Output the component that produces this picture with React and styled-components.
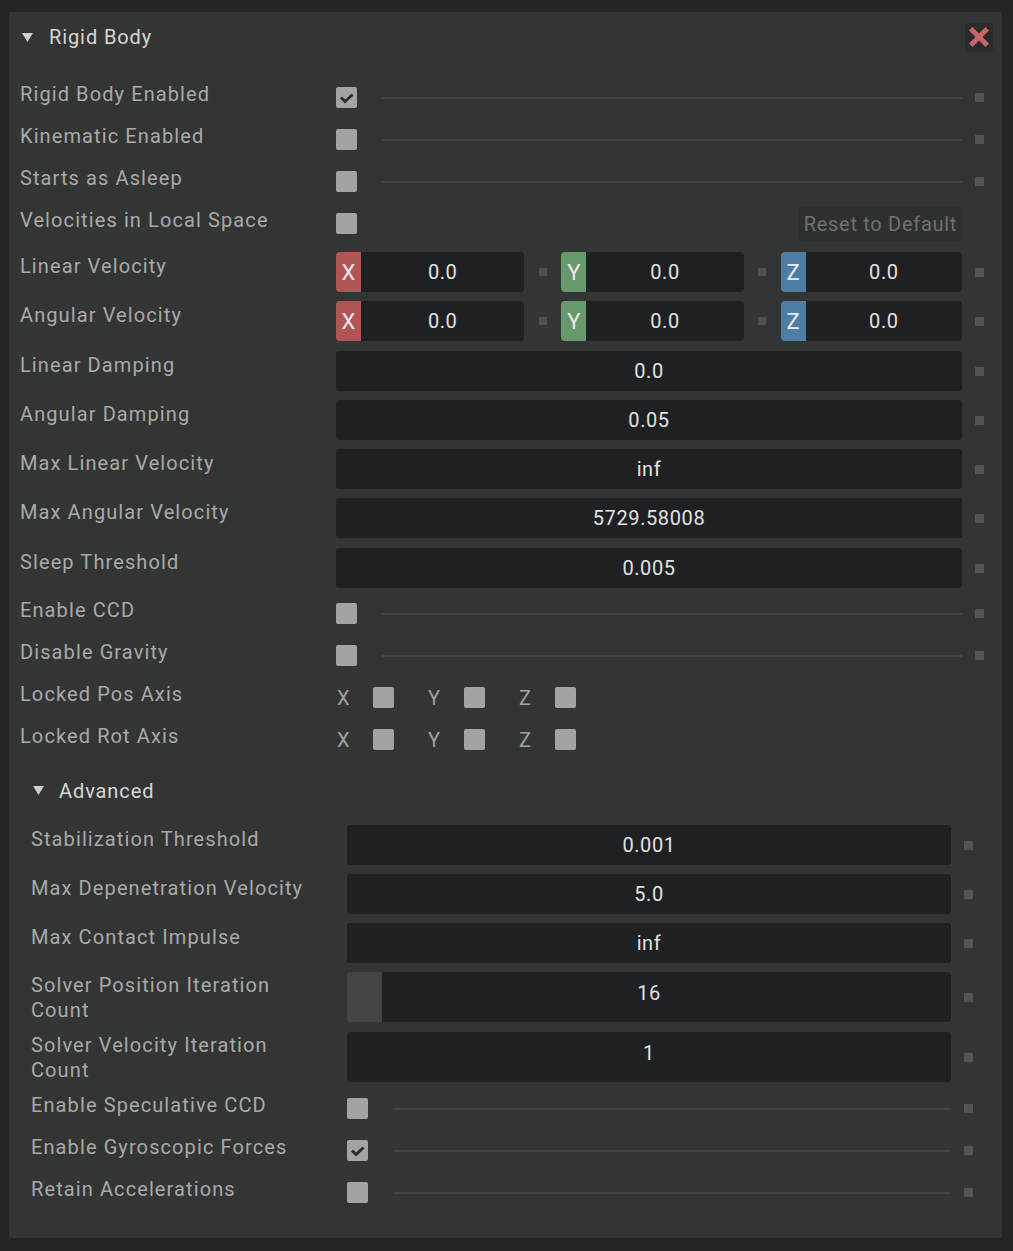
import React from "react";
import styled, { createGlobalStyle } from "styled-components";

const Global = createGlobalStyle`
  html, body { margin: 0; padding: 0; background: #232426; }
  body { font-family: Roboto, "Liberation Sans", Arial, sans-serif; }
  * { box-sizing: border-box; }
`;

const Page = styled.div`
  padding: 12px 11px 12px 9px;
  min-height: 1251px;
`;

const Panel = styled.div`
  width: 993px;
  background: #333534;
  border-radius: 2px;
  padding: 10px 18px 23.5px 11px;
  color: #a9a9a9;
  font-size: 20px;
  letter-spacing: 1.1px;
`;

const HeaderRow = styled.div`
  display: flex;
  align-items: center;
  height: 30px;
  margin-right: -9px;
  margin-top: ${(p) => p.$mt || 0}px;
  padding-left: ${(p) => p.$indent || 2}px;
`;

const HeaderTitle = styled.div`
  color: #d6d6d6;
  line-height: 30px;
  margin-left: ${(p) => p.$ml || 16}px;
  letter-spacing: 0.9px;
`;

const Spacer = styled.div`
  flex: 1;
`;

const CloseButton = styled.div`
  width: 28px;
  height: 29px;
  border-radius: 4px;
  background: #2a2b2c;
  display: flex;
  align-items: center;
  justify-content: center;
`;

const Rows = styled.div`
  display: flex;
  flex-direction: column;
  margin-top: ${(p) => p.$mt || 0}px;
`;

const Section = styled.div`
  display: flex;
  flex-direction: column;
  margin: ${(p) => p.$mt || 0}px 11px 0 11px;
`;

const Row = styled.div`
  display: flex;
  align-items: flex-start;
  height: ${(p) => p.$h}px;
  padding-top: ${(p) => p.$pt || 0}px;
`;

const Label = styled.div`
  width: 316px;
  flex: none;
  line-height: ${(p) => (p.$two ? 25 : 24)}px;
  margin-top: ${(p) => p.$mt}px;
  white-space: ${(p) => (p.$two ? "normal" : "nowrap")};
  padding-right: 40px;
`;

const Widget = styled.div`
  flex: 1;
  display: flex;
  align-items: center;
  height: ${(p) => p.$h}px;
  min-width: 0;
`;

const DefaultDot = styled.div`
  width: 9px;
  height: 9px;
  background: #535554;
  flex: none;
  margin-left: 13px;
  visibility: ${(p) => (p.$hidden ? "hidden" : "visible")};
  margin-top: ${(p) => p.$mt}px;
`;

const Box = styled.div`
  width: 21px;
  height: 21px;
  border-radius: 2px;
  background: #a3a3a3;
  flex: none;
  display: flex;
  align-items: center;
  justify-content: center;
`;

const Line = styled.div`
  flex: 1;
  height: 2px;
  background: #434544;
  margin-left: 25px;
`;

const Field = styled.div`
  position: relative;
  flex: 1;
  height: 100%;
  background: #1f2022;
  border-radius: 3px;
  display: flex;
  align-items: center;
  justify-content: center;
  color: #e2e2e2;
  overflow: hidden;
`;

const SliderFill = styled.div`
  position: absolute;
  left: 0;
  top: 0;
  bottom: 0;
  background: #444545;
`;

const Value = styled.span`
  position: relative;
  letter-spacing: 0.6px;
  margin-bottom: ${(p) => (p.$two ? 8 : 0)}px;
`;

const VecGroup = styled.div`
  display: flex;
  flex: ${(p) => p.$grow};
  height: 40px;
  background: #1f2022;
  border-radius: 4px;
  overflow: hidden;
`;

const Badge = styled.div`
  width: 25px;
  flex: none;
  background: ${(p) => p.$c};
  color: #ececec;
  font-size: 22px;
  display: flex;
  align-items: center;
  justify-content: center;
  letter-spacing: 0;
`;

const VecValue = styled.div`
  flex: 1;
  display: flex;
  align-items: center;
  justify-content: center;
  color: #e2e2e2;
  letter-spacing: 0.6px;
`;

const VecSep = styled.div`
  width: 37px;
  flex: none;
  display: flex;
  align-items: center;
  justify-content: center;
  &::after {
    content: "";
    width: 8px;
    height: 8px;
    background: #4f5150;
  }
`;

const ResetButton = styled.div`
  height: 35px;
  padding: 0 5px;
  border-radius: 4px;
  background: #2e3030;
  color: #6f7070;
  display: flex;
  align-items: center;
  letter-spacing: 0.7px;
`;

const AxisGroup = styled.div`
  display: flex;
  align-items: center;
  margin-right: 33px;
`;

const AxisLetter = styled.span`
  width: 12px;
  margin-left: 1px;
  margin-right: 24px;
  color: #a0a0a0;
  letter-spacing: 0;
`;

const Triangle = () => (
  <svg width="11" height="9" viewBox="0 0 11 9" style={{ flex: "none" }}>
    <polygon points="0,0 11,0 5.5,9" fill="#cfcfcf" />
  </svg>
);

const Check = () => (
  <svg width="15" height="12" viewBox="0 0 15 12">
    <polyline
      points="3,6.5 6,9.5 12.5,3.5"
      fill="none"
      stroke="#2b2c2c"
      strokeWidth="2.8"
      strokeLinecap="square"
    />
  </svg>
);

const CheckBox = ({ on }) => <Box>{on ? <Check /> : null}</Box>;

const CheckRow = ({ label, on, noDot, noLine, children }) => (
  <Row $h={42} $pt={10}>
    <Label $mt={-5}>{label}</Label>
    <Widget $h={21}>
      <CheckBox on={on} />
      {noLine ? <Spacer /> : <Line />}
      {children}
    </Widget>
    <DefaultDot $hidden={noDot} $mt={6} />
  </Row>
);

const FieldRow = ({ label, value, two, fill }) => {
  const h = two ? 50 : 40;
  return (
    <Row $h={h + 9.3} $pt={7}>
      <Label $mt={two ? 1 : 2} $two={two}>
        {label}
      </Label>
      <Widget $h={h}>
        <Field>
          {fill ? <SliderFill style={{ width: fill }} /> : null}
          <Value $two={two}>{value}</Value>
        </Field>
      </Widget>
      <DefaultDot $mt={h / 2 - 4} />
    </Row>
  );
};

const axisColors = { X: "#b05556", Y: "#68996c", Z: "#4e7ea6" };
const axisGrow = { X: 188, Y: 182, Z: 181 };

const VectorRow = ({ label }) => (
  <Row $h={49.3} $pt={7}>
    <Label $mt={2}>{label}</Label>
    <Widget $h={40}>
      {["X", "Y", "Z"].map((a, i) => (
        <React.Fragment key={a}>
          {i > 0 ? <VecSep /> : null}
          <VecGroup $grow={axisGrow[a]}>
            <Badge $c={axisColors[a]}>{a}</Badge>
            <VecValue>0.0</VecValue>
          </VecGroup>
        </React.Fragment>
      ))}
    </Widget>
    <DefaultDot $mt={16} />
  </Row>
);

const AxisRow = ({ label }) => (
  <Row $h={42} $pt={10}>
    <Label $mt={-5}>{label}</Label>
    <Widget $h={21}>
      {["X", "Y", "Z"].map((a) => (
        <AxisGroup key={a}>
          <AxisLetter>{a}</AxisLetter>
          <CheckBox />
        </AxisGroup>
      ))}
    </Widget>
    <DefaultDot $hidden $mt={6} />
  </Row>
);

const CloseIcon = () => (
  <svg width="20" height="20" viewBox="0 0 20 20">
    <path
      d="M3.5 3.5 L16.5 16.5 M16.5 3.5 L3.5 16.5"
      stroke="#c66767"
      strokeWidth="5"
      strokeLinecap="square"
    />
  </svg>
);

export default function App() {
  return (
    <>
      <Global />
      <Page>
        <Panel>
          <HeaderRow>
            <Triangle />
            <HeaderTitle>Rigid Body</HeaderTitle>
            <Spacer />
            <CloseButton>
              <CloseIcon />
            </CloseButton>
          </HeaderRow>

          <Rows $mt={25}>
            <CheckRow label="Rigid Body Enabled" on />
            <CheckRow label="Kinematic Enabled" />
            <CheckRow label="Starts as Asleep" />
            <CheckRow label="Velocities in Local Space" noDot noLine>
              <ResetButton>Reset to Default</ResetButton>
            </CheckRow>
          </Rows>

          <Rows>
            <VectorRow label="Linear Velocity" />
            <VectorRow label="Angular Velocity" />
            <FieldRow label="Linear Damping" value="0.0" />
            <FieldRow label="Angular Damping" value="0.05" />
            <FieldRow label="Max Linear Velocity" value="inf" />
            <FieldRow label="Max Angular Velocity" value="5729.58008" />
            <FieldRow label="Sleep Threshold" value="0.005" />
          </Rows>

          <Rows $mt={3}>
            <CheckRow label="Enable CCD" />
            <CheckRow label="Disable Gravity" />
            <AxisRow label="Locked Pos Axis" />
            <AxisRow label="Locked Rot Axis" />
          </Rows>

          <HeaderRow $indent={13} $mt={14.5}>
            <Triangle />
            <HeaderTitle $ml={15}>Advanced</HeaderTitle>
          </HeaderRow>

          <Section $mt={12}>
            <FieldRow label="Stabilization Threshold" value="0.001" />
            <FieldRow label="Max Depenetration Velocity" value="5.0" />
            <FieldRow label="Max Contact Impulse" value="inf" />
            <FieldRow
              label="Solver Position Iteration Count"
              value="16"
              two
              fill="35px"
            />
            <FieldRow label="Solver Velocity Iteration Count" value="1" two />
            <Rows $mt={4}>
              <CheckRow label="Enable Speculative CCD" />
              <CheckRow label="Enable Gyroscopic Forces" on />
              <CheckRow label="Retain Accelerations" />
            </Rows>
          </Section>
        </Panel>
      </Page>
    </>
  );
}
